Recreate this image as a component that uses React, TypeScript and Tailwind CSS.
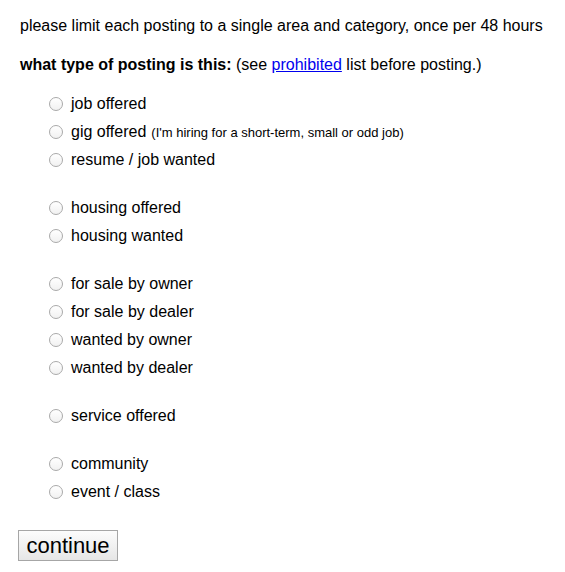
import React from "react";

const groups: { label: string; note?: string }[][] = [
  [
    { label: "job offered" },
    { label: "gig offered", note: "(I'm hiring for a short-term, small or odd job)" },
    { label: "resume / job wanted" },
  ],
  [{ label: "housing offered" }, { label: "housing wanted" }],
  [
    { label: "for sale by owner" },
    { label: "for sale by dealer" },
    { label: "wanted by owner" },
    { label: "wanted by dealer" },
  ],
  [{ label: "service offered" }],
  [{ label: "community" }, { label: "event / class" }],
];

export default function App() {
  return (
    <div
      className="bg-white text-[#000] px-[20px] pt-[17px] text-[16px] leading-[18px]"
      style={{ fontFamily: '"Liberation Sans", Arial, Helvetica, sans-serif' }}
    >
      <p className="m-0">please limit each posting to a single area and category, once per 48 hours</p>
      <p className="mt-[21px]">
        <b>what type of posting is this:</b> (see{" "}
        <a href="#" className="text-[#0000ee] underline">
          prohibited
        </a>{" "}
        list before posting.)
      </p>
      <div className="mt-[16px] flex flex-col gap-[20px]">
        {groups.map((g, gi) => (
          <div key={gi} className="flex flex-col">
            {g.map((item) => (
              <label key={item.label} className="flex items-center h-[28px] pl-[29px]">
                <span className="w-[14px] h-[14px] rounded-full border border-[#aaaaaa] bg-gradient-to-b from-white to-[#f1f1f1] shrink-0" />
                <span className="ml-[8px]">
                  {item.label}
                  {item.note && <span className="text-[13px] ml-[5px]">{item.note}</span>}
                </span>
              </label>
            ))}
          </div>
        ))}
      </div>
      <div className="mt-[24px] ml-[-2px]">
        <button className="w-[100px] h-[31px] border border-[#a6a6a6] bg-gradient-to-b from-[#fcfcfc] to-[#e6e6e6] text-[22px] leading-[28px] text-black">
          continue
        </button>
      </div>
    </div>
  );
}
